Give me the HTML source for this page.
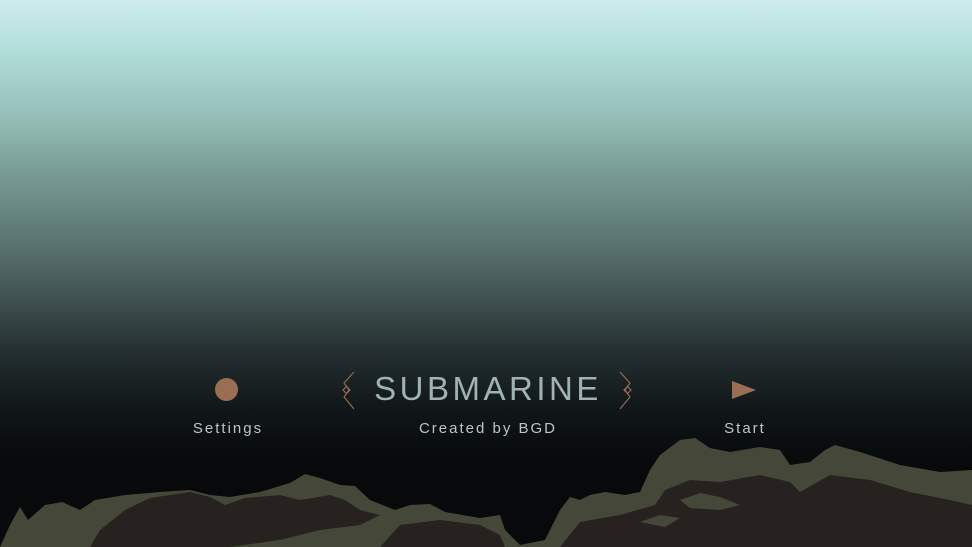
<!DOCTYPE html>
<html><head><style>
html,body{margin:0;padding:0}
body{width:972px;height:547px;overflow:hidden;position:relative;font-family:"Liberation Sans",sans-serif;
background:linear-gradient(to bottom,#cfeced 0px,#b4e1dd 45px,#98c2bb 110px,#7a9d97 170px,#5b7572 240px,#3f5150 300px,#253031 350px,#131a1c 400px,#0a0e10 440px,#07090a 470px,#07090a 547px);}
.t{position:absolute;color:#b9c7c6;letter-spacing:2px;font-size:15px;text-align:center}
</style></head><body>
<div style="position:absolute;left:215px;top:378px;width:23px;height:23px;border-radius:50%;background:#9a6e55"></div>
<svg style="position:absolute;left:732px;top:381px" width="24" height="18"><polygon points="0,0 24,9 0,18" fill="#9a6e55"/></svg>
<div class="t" style="left:168px;top:420px;width:120px">Settings</div>
<div class="t" style="left:385px;top:420px;width:206px">Created by BGD</div>
<div class="t" style="left:705px;top:420px;width:80px">Start</div>
<div class="t" style="left:360px;top:370px;width:256px;font-size:33px;letter-spacing:3.5px;color:#9fb3b2">SUBMARINE</div>
<svg style="position:absolute;left:338px;top:370px" width="22" height="42" fill="none" stroke="#9a6e55" stroke-width="1.1">
<polyline points="16,2 6,13 11,20 6,27 16,39"/><rect x="6" y="17.5" width="5" height="5" transform="rotate(45 8.5 20)"/></svg>
<svg style="position:absolute;left:614px;top:370px" width="22" height="42" fill="none" stroke="#9a6e55" stroke-width="1.1">
<polyline points="6,2 16,13 11,20 16,27 6,39"/><rect x="11" y="17.5" width="5" height="5" transform="rotate(45 13.5 20)"/></svg>
<svg style="position:absolute;left:0;top:0" width="972" height="547">
<polygon fill="#454838" points="0,547 10,525 20,507 28,520 45,505 62,502 80,510 95,500 125,495 160,492 190,490 210,495 230,497 260,492 290,483 305,474 320,478 340,485 355,486 370,500 395,510 410,505 430,504 445,512 480,518 500,515 505,530 520,545 545,540 560,510 570,497 580,500 590,495 605,492 625,495 640,492 650,470 660,455 680,440 695,438 710,448 730,452 760,447 780,450 790,465 810,462 825,450 835,445 860,452 900,465 940,472 972,470 972,547"/>
<polygon fill="#27221f" points="125,510 150,498 190,492 210,497 225,505 245,498 280,495 300,500 330,495 345,500 360,510 380,515 360,525 320,530 280,540 230,547 90,547 100,530"/>
<polygon fill="#27221f" points="400,525 440,520 480,525 500,535 505,547 380,547"/>
<polygon fill="#27221f" points="560,547 580,522 620,515 655,505 665,490 690,480 720,482 760,475 790,482 800,492 830,475 870,480 910,492 950,500 972,505 972,547"/>
<polygon fill="#454838" points="680,500 700,493 720,497 740,505 720,510 690,508"/>
<polygon fill="#454838" points="640,522 660,515 680,518 665,527"/>
</svg>
</body></html>
